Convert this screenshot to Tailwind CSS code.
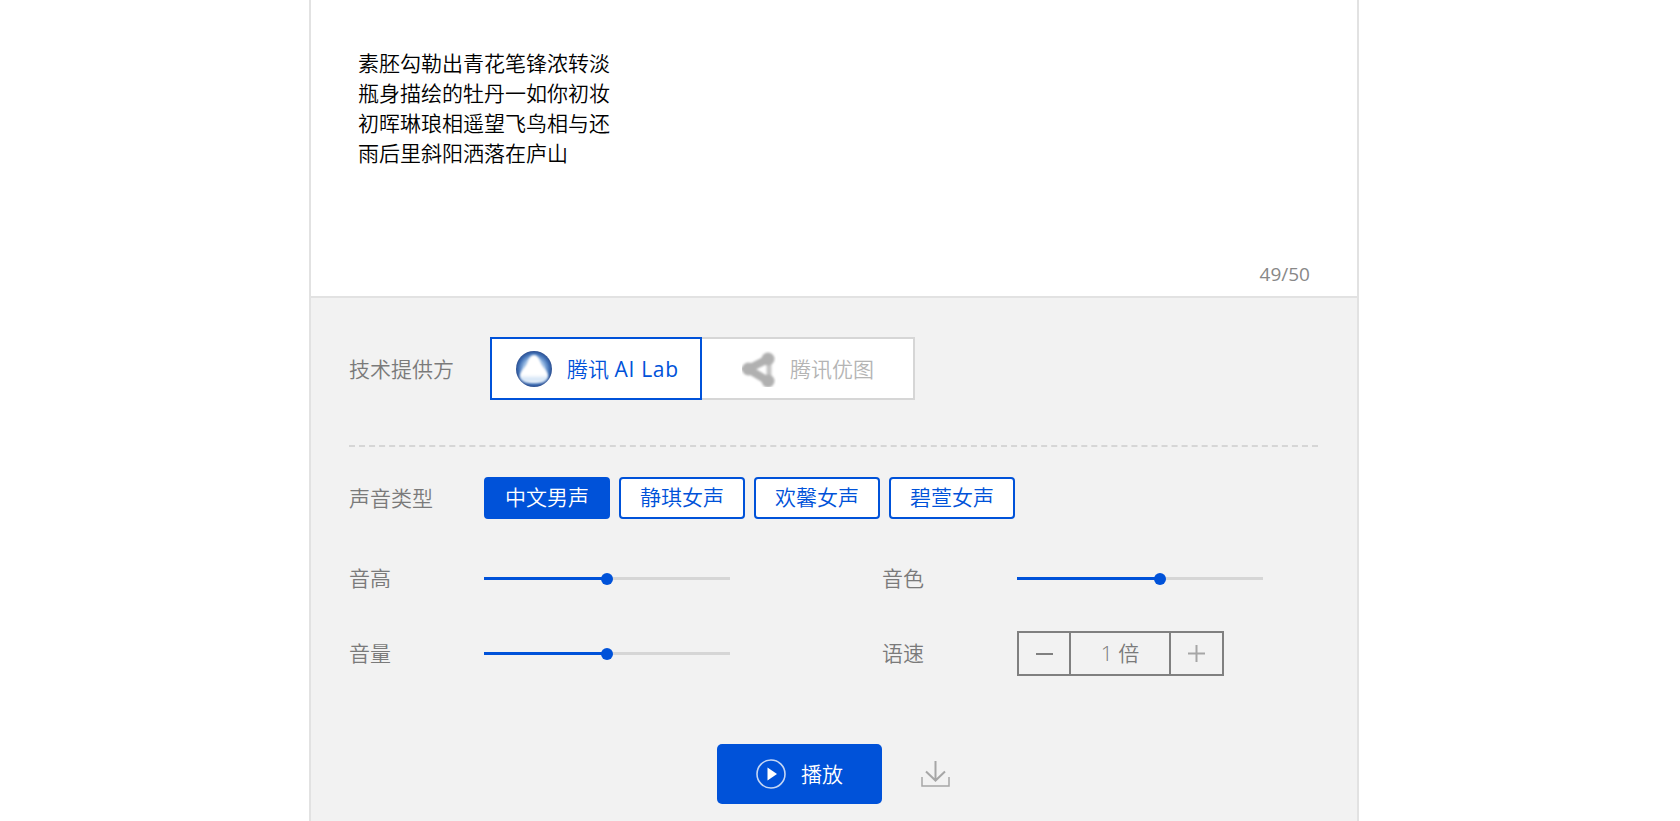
<!DOCTYPE html>
<html lang="zh-CN">
<head>
  <meta charset="UTF-8">
  <title>语音合成</title>
  <script src="https://cdn.jsdelivr.net/npm/@tailwindcss/browser@4"></script>
</head>
<body class="bg-white font-['Open_Sans','Noto_Sans_CJK_SC',sans-serif] font-[350] text-[21px] overflow-hidden">
  <main class="ml-[309px] w-[1050px] h-[821px] border-x-2 border-[#e2e2e2] flex flex-col">

    <!-- 文本框 -->
    <section class="relative h-[298px] shrink-0 border-b-2 border-[#e2e2e2] bg-white pl-[47px] pt-[48px] text-black leading-[30px]">
      <p>素胚勾勒出青花笔锋浓转淡</p>
      <p>瓶身描绘的牡丹一如你初妆</p>
      <p>初晖琳琅相遥望飞鸟相与还</p>
      <p>雨后里斜阳洒落在庐山</p>
      <span class="absolute right-[47px] bottom-[9px] font-normal text-[19px] leading-[26px] text-[#888888]">49/50</span>
    </section>

    <!-- 设置面板 -->
    <section class="flex-1 bg-[#f2f2f2] pl-[38px] pr-[39px] pt-[39px] text-[#7a7a7a]">
      <div class="flex items-center h-[63px]">
        <span class="w-[141px] leading-[30px]">技术提供方</span>
        <div class="flex">
          <button class="w-[212px] h-[63px] border-2 border-[#0052d9] bg-white flex items-center pl-[24px] gap-[15px] text-[#0052d9]">
            <svg width="36" height="36" viewBox="0 0 36 36">
              <defs>
                <radialGradient id="lab" cx="50%" cy="50%" r="50%">
                  <stop offset="60%" stop-color="#8fb4e0"/>
                  <stop offset="85%" stop-color="#3f6fb4"/>
                  <stop offset="100%" stop-color="#2c4f91"/>
                </radialGradient>
                <linearGradient id="labIn" x1="0" y1="0" x2="0" y2="1">
                  <stop offset="70%" stop-color="#ffffff"/>
                  <stop offset="88%" stop-color="#cfe2f5"/>
                  <stop offset="100%" stop-color="#ffffff"/>
                </linearGradient>
                <filter id="labBlur"><feGaussianBlur stdDeviation="0.9"/></filter>
              </defs>
              <circle cx="18" cy="18" r="18" fill="url(#lab)"/>
              <path d="M18 4C21 4 23 7 25 12C27 17 33 21 32 26C31 31 26 32 18 32C10 32 5 31 4 26C3 21 9 17 11 12C13 7 15 4 18 4Z" fill="url(#labIn)" filter="url(#labBlur)"/>
            </svg>
            <span class="leading-[30px] whitespace-nowrap">腾讯 <span class="font-normal tracking-[0.7px]">AI Lab</span></span>
          </button>
          <button class="w-[213px] h-[63px] border-2 border-l-0 border-[#d6d6d6] bg-white flex items-center pl-[40px] gap-[14px] text-[#b4b4b4]">
            <svg width="34" height="36" viewBox="0 0 34 36">
              <defs><filter id="shareBlur"><feGaussianBlur stdDeviation="0.8"/></filter></defs>
              <g filter="url(#shareBlur)">
                <path d="M27 9V29" stroke="#c4c4c4" stroke-width="5"/>
                <path d="M26 8L6 18L26 30" fill="none" stroke="#b0b0b0" stroke-width="8"/>
                <g fill="#b0b0b0">
                  <circle cx="26" cy="8" r="6.5"/>
                  <circle cx="6.5" cy="18" r="6.5"/>
                  <circle cx="26" cy="30" r="6.5"/>
                </g>
              </g>
            </svg>
            <span class="leading-[30px] whitespace-nowrap">腾讯优图</span>
          </button>
        </div>
      </div>

      <div class="mt-[45px] border-t-2 border-dashed border-[#d6d6d6]"></div>

      <div class="mt-[30px] flex items-center h-[42px]">
        <span class="w-[135px] leading-[30px]">声音类型</span>
        <div class="flex gap-[9px]">
          <button class="w-[126px] h-[42px] rounded-[4px] bg-[#0052d9] border-2 border-[#0052d9] text-white">中文男声</button>
          <button class="w-[126px] h-[42px] rounded-[4px] bg-white border-2 border-[#0052d9] text-[#0052d9]">静琪女声</button>
          <button class="w-[126px] h-[42px] rounded-[4px] bg-white border-2 border-[#0052d9] text-[#0052d9]">欢馨女声</button>
          <button class="w-[126px] h-[42px] rounded-[4px] bg-white border-2 border-[#0052d9] text-[#0052d9]">碧萱女声</button>
        </div>
      </div>

      <div class="mt-[37px] grid grid-cols-[533px_1fr] gap-y-[30px]">
        <div class="flex items-center h-[45px]">
          <span class="w-[135px]">音高</span>
          <div class="relative w-[246px] h-[3px] bg-[#d6d6d6]">
            <div class="h-full bg-[#0052d9]" style="width: 123px"></div>
            <div class="absolute top-[-4.5px] left-[117px] size-[12px] rounded-full bg-[#0052d9]"></div>
          </div>
        </div>
        <div class="flex items-center h-[45px]">
          <span class="w-[135px]">音色</span>
          <div class="relative w-[246px] h-[3px] bg-[#d6d6d6]">
            <div class="h-full bg-[#0052d9]" style="width: 143px"></div>
            <div class="absolute top-[-4.5px] left-[137px] size-[12px] rounded-full bg-[#0052d9]"></div>
          </div>
        </div>
        <div class="flex items-center h-[45px]">
          <span class="w-[135px]">音量</span>
          <div class="relative w-[246px] h-[3px] bg-[#d6d6d6]">
            <div class="h-full bg-[#0052d9]" style="width: 123px"></div>
            <div class="absolute top-[-4.5px] left-[117px] size-[12px] rounded-full bg-[#0052d9]"></div>
          </div>
        </div>
        <div class="flex items-center h-[45px]">
          <span class="w-[135px]">语速</span>
          <div class="flex w-[207px] h-[45px] border-2 border-[#808080]">
            <div class="w-[52px] border-r-2 border-[#808080] flex items-center justify-center">
              <span class="w-[17px] h-[2px] bg-[#808080]"></span>
            </div>
            <div class="w-[98px] flex items-center justify-center">1 倍</div>
            <div class="flex-1 border-l-2 border-[#808080] flex items-center justify-center">
              <svg width="17" height="17" viewBox="0 0 17 17"><path d="M0 8.5H17M8.5 0V17" stroke="#a6a6a6" stroke-width="2"/></svg>
            </div>
          </div>
        </div>
      </div>

      <div class="mt-[68px] flex justify-center">
        <button class="w-[165px] h-[60px] rounded-[5px] bg-[#0052d9] text-white flex items-center pl-[39px] gap-[15px]">
          <svg width="30" height="30" viewBox="0 0 30 30" fill="none">
            <circle cx="15" cy="15" r="14" stroke="#c4d6f4" stroke-width="1.6"/>
            <path d="M11.5 8.5L21 15L11.5 21.5Z" fill="#ffffff"/>
          </svg>
          <span class="leading-[30px]">播放</span>
        </button>
        <button class="ml-[39px] w-[29px] h-[60px] flex items-center justify-center">
          <svg width="29" height="26" viewBox="0 0 29 26" fill="none" stroke="#a6a6a6" stroke-width="2">
            <path d="M14.5 0V19M5 10.5L14.5 19.5L24 10.5"/>
            <path d="M1 16V25H28V16" stroke-width="1.5"/>
          </svg>
        </button>
      </div>
    </section>
  </main>
</body>
</html>
